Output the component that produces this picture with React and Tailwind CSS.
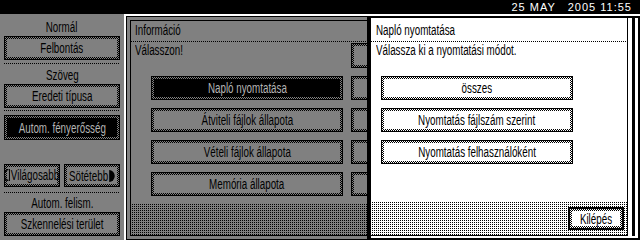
// App.jsx
// Copier panel: left settings column, "Információ" menu and the "Napló nyomtatása" dialog
import React from 'react';

const checker = 'bg-[image:repeating-conic-gradient(#000_0_25%,transparent_0_50%)] bg-[length:2px_2px]';
const dots = 'bg-[image:repeating-conic-gradient(#000_0_25%,transparent_0_100%)] bg-[length:2px_2px]';

// narrow panel lettering: Arial widths squeezed sideways
function T({ children, left = false }) {
  return (
    <span className={`inline-block whitespace-nowrap scale-x-[0.7] ${left ? 'origin-left' : 'origin-center'}`}>
      {children}
    </span>
  );
}

function Btn({ children, kind = 'gray', className = '' }) {
  const outer =
    kind === 'dark'
      ? 'bg-[#808080] border border-black p-[2px]'
      : kind === 'white'
      ? 'bg-white border border-black p-[2px]'
      : kind === 'exit'
      ? 'bg-white border-2 border-black p-[2px]'
      : 'bg-[#808080] border border-black p-[2px]';
  const inner =
    kind === 'dark'
      ? 'bg-black text-[#b4b4b4]'
      : kind === 'white' || kind === 'exit'
      ? 'bg-white text-black'
      : 'bg-[#808080] text-black';
  return (
    <div className={`${outer} ${checker} ${className}`}>
      <div className={`${inner} h-full w-full flex items-center justify-center whitespace-nowrap leading-[16px]`}>
        {children}
      </div>
    </div>
  );
}

function DotLine({ className = '' }) {
  return <div className={`h-px bg-[image:repeating-linear-gradient(90deg,#000_0_1px,transparent_1px_2px)] ${className}`} />;
}

function LeftPanel() {
  return (
    <div className="w-[124px] shrink-0 bg-[#808080] px-[4px] flex flex-col text-[14px] text-black">
      <div className="mt-[5px] h-[16px] leading-[16px] text-center"><T>Normál</T></div>
      <Btn className="mt-px h-[24px]"><T>Felbontás</T></Btn>
      <DotLine className="mt-[3px]" />
      <div className="mt-[3px] h-[16px] leading-[16px] text-center"><T>Szöveg</T></div>
      <Btn className="mt-px h-[24px]"><T>Eredeti típusa</T></Btn>
      <DotLine className="mt-[2px]" />
      <Btn kind="dark" className="mt-[4px] h-[25px]"><T>Autom. fényerősség</T></Btn>
      <div className="mt-[24px] h-[23px] flex justify-between">
        <Btn className="w-[56px] h-full">
          <T>
            <span className="inline-flex items-center">
              <svg width="9" height="12" viewBox="0 0 9 12" className="mr-px">
                <path d="M6.5 0.5 A6 5.5 0 0 0 6.5 11.5" fill="none" stroke="#000" strokeWidth="1.4" />
                <path d="M8 0 V12" stroke="#000" strokeWidth="1.4" />
              </svg>
              Világosabb
            </span>
          </T>
        </Btn>
        <Btn className="w-[56px] h-full">
          <T>
            <span className="inline-flex items-center">
              Sötétebb
              <svg width="9" height="12" viewBox="0 0 9 12" className="ml-px">
                <path d="M0.5 0 A8 6 0 0 1 0.5 12 Z" fill="#000" />
              </svg>
            </span>
          </T>
        </Btn>
      </div>
      <DotLine className="mt-[5px]" />
      <div className="mt-[2px] h-[16px] leading-[16px] text-center"><T>Autom. felism.</T></div>
      <Btn className="mt-px h-[24px]"><T>Szkennelési terület</T></Btn>
    </div>
  );
}

function MainPanel() {
  const items = ['Napló nyomtatása', 'Átviteli fájlok állapota', 'Vételi fájlok állapota', 'Memória állapota'];
  return (
    <div className="flex-1 border-l-2 border-t-2 border-white">
      <div className="h-full border border-black bg-[#808080] p-[3px]">
        <div className="h-full border border-black flex flex-col text-[14px] text-black">
          <div className="h-[20px] pl-[4px] pt-px leading-[16px]"><T left>Információ</T></div>
          <DotLine />
          <div className="flex h-[162px]">
            <div className="flex flex-col">
              <div className="h-[34px] pl-[4px] leading-[16px]"><T left>Válasszon!</T></div>
              <div className="ml-[20px] w-[192px] flex flex-col gap-[8px]">
                {items.map((t, i) => (
                  <Btn key={t} kind={i === 0 ? 'dark' : 'gray'} className="h-[24px]"><T>{t}</T></Btn>
                ))}
              </div>
            </div>
            <div className="ml-[8px] pt-px flex flex-col gap-[8px]">
              <Btn className="w-[40px] h-[25px]">&nbsp;</Btn>
              <Btn className="w-[40px] h-[24px]">&nbsp;</Btn>
              <Btn className="w-[40px] h-[24px]">&nbsp;</Btn>
              <Btn className="w-[40px] h-[24px]">&nbsp;</Btn>
              <Btn className="w-[40px] h-[24px]">&nbsp;</Btn>
            </div>
          </div>
          <div className={`flex-1 bg-[#808080] ${dots}`} />
        </div>
      </div>
    </div>
  );
}

function PrintDialog() {
  const modes = ['összes', 'Nyomtatás fájlszám szerint', 'Nyomtatás felhasználóként'];
  return (
    <div className="absolute left-[367px] top-0 right-0 bottom-0 bg-white pt-[2px]">
      <div className="h-full border-l-[4px] border-t-2 border-r-2 border-b-2 border-black bg-white pr-[3px] pb-[2px]">
        <div className="h-full border-r-[3px] border-black bg-white pr-[4px]">
          <div className="h-full border-r border-b border-black flex flex-col text-[14px] text-black">
            <div className="h-[23px] pl-[5px] pt-[4px] leading-[16px]"><T left>Napló nyomtatása</T></div>
            <DotLine />
            <div className="h-[34px] pl-[5px] leading-[16px]"><T left>Válassza ki a nyomtatási módot.</T></div>
            <div className="ml-[10px] w-[192px] flex flex-col gap-[8px]">
              {modes.map((t) => (
                <Btn key={t} kind="white" className="h-[24px]"><T>{t}</T></Btn>
              ))}
            </div>
            <div className="flex-1" />
            <div className={`h-[33px] flex items-center justify-end pr-[3px] bg-white ${dots}`}>
              <Btn kind="exit" className="w-[56px] h-[23px]"><T>Kilépés</T></Btn>
            </div>
          </div>
        </div>
      </div>
    </div>
  );
}

export default function App() {
  return (
    <div className="w-[640px] h-[240px] bg-black flex flex-col overflow-hidden font-[family-name:'Liberation_Sans',Arial,sans-serif]">
      <div className="h-[14px] shrink-0 flex items-center justify-end gap-[12px] pr-[8px] text-white text-[11px] leading-none tracking-[1px]">
        <span>25 MAY</span>
        <span>2005 11:55</span>
      </div>
      <div className="relative flex h-[226px]">
        <LeftPanel />
        <MainPanel />
        <PrintDialog />
      </div>
    </div>
  );
}
